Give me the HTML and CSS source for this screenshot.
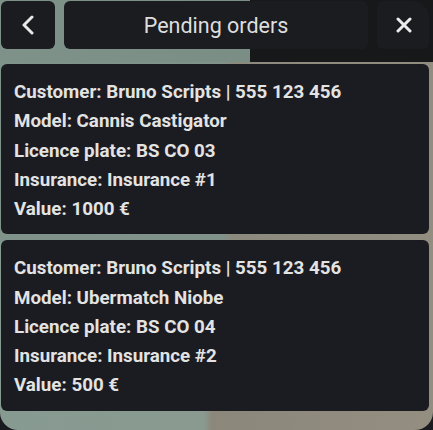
FILE: index.html
```html
<!DOCTYPE html>
<html lang="en">
<head>
<meta charset="UTF-8">
<meta name="viewport" content="width=device-width, initial-scale=1.0">
<title>Pending orders</title>
<link rel="stylesheet" href="styles.css">
</head>
<body>
<div class="scene">
    <div class="menu">
        <!-- Cabecera -->
        <div class="header">
            <div class="btn back">
                <svg width="14" height="20" viewBox="0 0 14 20">
                    <path d="M11 2 L3 10 L11 18" fill="none" stroke="#e8e8e8" stroke-width="3" stroke-linecap="round" stroke-linejoin="round"/>
                </svg>
            </div>
            <div class="title">Pending orders</div>
            <div class="btn close">
                <svg width="16" height="16" viewBox="0 0 16 16">
                    <path d="M2 2 L14 14 M14 2 L2 14" fill="none" stroke="#ececec" stroke-width="3" stroke-linecap="round"/>
                </svg>
            </div>
        </div>

        <!-- Pedidos -->
        <div class="order">
            <p>Customer: Bruno Scripts | 555 123 456</p>
            <p>Model: Cannis Castigator</p>
            <p>Licence plate: BS CO 03</p>
            <p>Insurance: Insurance #1</p>
            <p>Value: 1000 €</p>
        </div>

        <div class="order">
            <p>Customer: Bruno Scripts | 555 123 456</p>
            <p>Model: Ubermatch Niobe</p>
            <p>Licence plate: BS CO 04</p>
            <p>Insurance: Insurance #2</p>
            <p>Value: 500 €</p>
        </div>
    </div>
</div>
</body>
</html>
```

FILE: styles.css
```css
html, body {
    margin: 0;
    padding: 0;
    background-color: #1a1b1f;
}

/* Fondo del juego */
.scene {
    width: 433px;
    height: 430px;
    border-radius: 0 0 18px 18px;
    overflow: hidden;
    background:
        linear-gradient(to right, #7e928a 0, #7b8e86 250px, #17181a 250px) top / 100% 62px no-repeat,
        linear-gradient(to right, #7f938b 0, #80928a 222px, #8c8a7e 232px, #918d80 100%) 0 62px / 100% 180px no-repeat,
        linear-gradient(to right, #879a91 0, #8a9a90 204px, #8b877b 212px, #938e80 100%);
    font-family: Roboto, "Noto Sans", sans-serif;
    color: #e4e4e4;
}

.menu {
    padding: 1px 4px 0 1px;
}

.header {
    display: flex;
    gap: 9px;
    height: 48px;
    margin-bottom: 15px;
}

.btn,
.title {
    background-color: #1b1c20;
    border-radius: 6px;
    display: flex;
    align-items: center;
    justify-content: center;
}

.back {
    width: 54px;
}

.back svg {
    margin-left: -1px;
}

.title {
    flex: 1;
    font-size: 21.5px;
    color: #dedede;
}

.close {
    width: 52px;
    border-radius: 6px 16px 6px 6px;
}

.close svg {
    margin-left: 2px;
    margin-top: -1px;
}

.order {
    background-color: #1b1c21;
    border-radius: 6px;
    padding: 14px 13px 10px 13px;
    margin-bottom: 6px;
}

.order p {
    margin: 0;
    font-size: 18.75px;
    font-weight: bold;
    line-height: 29.25px;
    color: #e3e3e3;
}
```
